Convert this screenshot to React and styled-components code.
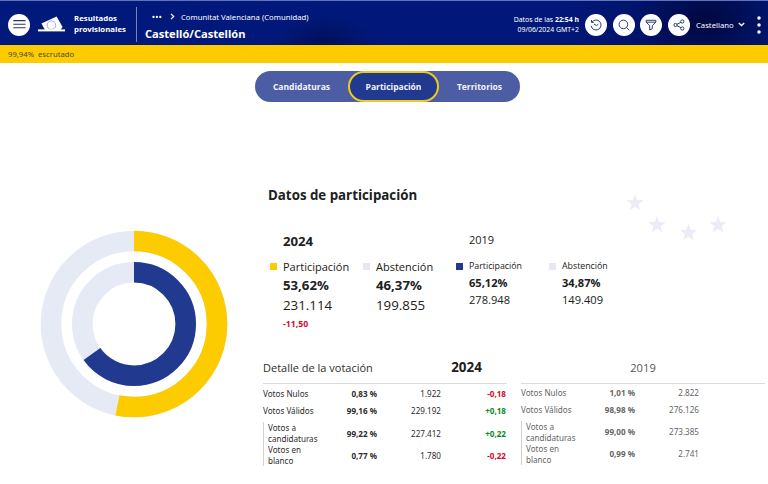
import styled, { createGlobalStyle, css } from 'styled-components';

const OUTER = { radius: 83, width: 20.6, value: 53.2, color: '#fccc00' };
const INNER = { radius: 51.7, width: 20.6, value: 65.12, color: '#213a8f' };

const TABS = ['Candidaturas', 'Participación', 'Territorios'];

const STATS_2024 = [
  { label: 'Participación', percent: '53,62%', votes: '231.114', diff: '-11,50', color: '#fccc00' },
  { label: 'Abstención', percent: '46,37%', votes: '199.855', color: '#e5e8f2' },
];

const STATS_2019 = [
  { label: 'Participación', percent: '65,12%', votes: '278.948', color: '#213a8f' },
  { label: 'Abstención', percent: '34,87%', votes: '149.409', color: '#e5e8f2' },
];

const DETAIL_2024 = [
  { label: 'Votos Nulos', percent: '0,83 %', votes: '1.922', diff: '-0,18' },
  { label: 'Votos Válidos', percent: '99,16 %', votes: '229.192', diff: '+0,18' },
  { label: 'Votos a candidaturas', percent: '99,22 %', votes: '227.412', diff: '+0,22', nested: true },
  { label: 'Votos en blanco', percent: '0,77 %', votes: '1.780', diff: '-0,22', nested: true },
];

const DETAIL_2019 = [
  { label: 'Votos Nulos', percent: '1,01 %', votes: '2.822' },
  { label: 'Votos Válidos', percent: '98,98 %', votes: '276.126' },
  { label: 'Votos a candidaturas', percent: '99,00 %', votes: '273.385', nested: true },
  { label: 'Votos en blanco', percent: '0,99 %', votes: '2.741', nested: true },
];

const STARS = [
  [10, 10],
  [32, 32],
  [63.5, 40],
  [93, 32],
];

const starPoints = (cx, cy, r) =>
  Array.from({ length: 10 }, (_, i) => {
    const angle = (i * Math.PI) / 5 - Math.PI / 2;
    const dist = i % 2 ? r * 0.42 : r;
    return `${cx + dist * Math.cos(angle)},${cy + dist * Math.sin(angle)}`;
  }).join(' ');

const Ring = ({ radius, width, value, color }) => (
  <g fill="none" strokeWidth={width} transform="rotate(-90 94 94)">
    <circle cx="94" cy="94" r={radius} stroke="#e6eaf4" />
    <circle
      cx="94"
      cy="94"
      r={radius}
      stroke={color}
      pathLength="100"
      strokeDasharray={`${value} ${100 - value}`}
    />
  </g>
);

const StatGroup = ({ year, items, small }) => (
  <Group>
    <Year $small={small}>{year}</Year>
    <GroupItems>
      {items.map((item) => (
        <Stat key={item.label}>
          <Marker $color={item.color} />
          <StatBody>
            <StatLabel $small={small}>{item.label}</StatLabel>
            <StatPercent $small={small}>{item.percent}</StatPercent>
            <StatVotes $small={small}>{item.votes}</StatVotes>
            {item.diff && <StatDiff>{item.diff}</StatDiff>}
          </StatBody>
        </Stat>
      ))}
    </GroupItems>
  </Group>
);

const DetailTable = ({ title, year, rows, muted }) => (
  <Detail $muted={muted}>
    <DetailHead $muted={muted}>
      <DetailTitle>{title}</DetailTitle>
      <DetailYear $muted={muted}>{year}</DetailYear>
    </DetailHead>
    {rows
      .filter((row) => !row.nested)
      .map((row) => (
        <DetailRow key={row.label} row={row} />
      ))}
    <NestedRows $muted={muted}>
      {rows
        .filter((row) => row.nested)
        .map((row) => (
          <DetailRow key={row.label} row={row} />
        ))}
    </NestedRows>
  </Detail>
);

const DetailRow = ({ row }) => (
  <Row $nested={row.nested}>
    <span>{row.label}</span>
    <Percent>{row.percent}</Percent>
    <Votes>{row.votes}</Votes>
    {row.diff && <Diff $negative={row.diff.startsWith('-')}>{row.diff}</Diff>}
  </Row>
);

const App = () => {
  return (
    <Page>
      <GlobalStyle />
      <Header>
        <RoundButton aria-label="Menú">
          <svg width="13" height="11" viewBox="0 0 13 11" stroke="#26356f" strokeWidth="1.1">
            <path d="M0.3 1.6h12.2M0.3 5.2h12.2M0.3 8.8h12.2" />
          </svg>
        </RoundButton>
        <Logo width="27" height="17" viewBox="0 0 27 17">
          <path d="M3.4 7.4 L18.6 0.4 L24.6 11 L22.4 14 H7 Z" fill="#fff" />
          <circle cx="13.4" cy="9.2" r="4.3" fill="#fff" stroke="#7d88bd" strokeWidth="0.7" />
          <rect x="0" y="13.4" width="27" height="2" fill="#fff" />
        </Logo>
        <Brand>
          Resultados
          <br />
          provisionales
        </Brand>
        <Place>
          <Breadcrumb>
            <svg width="10" height="4" viewBox="0 0 10 4" fill="#fff">
              <circle cx="1.5" cy="2" r="1.15" />
              <circle cx="4.9" cy="2" r="1.15" />
              <circle cx="8.3" cy="2" r="1.15" />
            </svg>
            <svg width="5" height="7" viewBox="0 0 5 7" fill="none" stroke="#fff" strokeWidth="1.2">
              <path d="M1 0.8l2.7 2.7L1 6.2" />
            </svg>
            <span>Comunitat Valenciana (Comunidad)</span>
          </Breadcrumb>
          <PlaceName>Castelló/Castellón</PlaceName>
        </Place>
        <Updated>
          Datos de las <b>22:54 h</b>
          <br />
          09/06/2024 GMT+2
        </Updated>
        <Actions>
          <RoundButton aria-label="Histórico">
            <Icon viewBox="0 0 12 12">
              <path d="M1.9 3.2A5 5 0 1 1 1.1 6.8" />
              <path d="M1.5 1v2.4h2.4M4 5l2.4 1.6 1.9-1.4" />
            </Icon>
          </RoundButton>
          <RoundButton aria-label="Buscar">
            <Icon viewBox="0 0 12 12">
              <circle cx="5.4" cy="5.4" r="4.3" />
              <path d="M8.5 8.5l2.8 2.8" />
            </Icon>
          </RoundButton>
          <RoundButton aria-label="Filtrar">
            <Icon viewBox="0 0 12 12">
              <path d="M1.2 1.3h9.6v1.9L7.3 6.6v3.1L4.7 11V6.6L1.2 3.2zM1.2 3.2h9.6" />
            </Icon>
          </RoundButton>
          <RoundButton aria-label="Compartir">
            <Icon viewBox="0 0 12 12">
              <circle cx="2.5" cy="6" r="1.6" />
              <circle cx="9.3" cy="2.5" r="1.6" />
              <circle cx="9.3" cy="9.5" r="1.6" />
              <path d="M4 5.3l3.9-2M4 6.7l3.9 2" />
            </Icon>
          </RoundButton>
        </Actions>
        <Language>
          Castellano
          <svg width="7" height="5" viewBox="0 0 7 5" fill="none" stroke="#fff" strokeWidth="1.3">
            <path d="M0.8 1l2.7 2.5L6.2 1" />
          </svg>
        </Language>
        <svg width="4" height="18" viewBox="0 0 4 18" fill="#fff">
          <circle cx="2" cy="2" r="1.75" />
          <circle cx="2" cy="9" r="1.75" />
          <circle cx="2" cy="16" r="1.75" />
        </svg>
      </Header>
      <Counted>99,94%&nbsp; escrutado</Counted>

      <Tabs>
        {TABS.map((tab) => (
          <Tab key={tab} $active={tab === 'Participación'}>
            {tab}
          </Tab>
        ))}
      </Tabs>

      <Main>
        <Chart width="188" height="188" viewBox="0 0 188 188">
          <Ring {...OUTER} />
          <Ring {...INNER} />
        </Chart>
        <Content>
          <Title>Datos de participación</Title>
          <Stars width="104" height="52" viewBox="0 0 104 52" fill="#ebecf8">
            {STARS.map(([x, y]) => (
              <polygon key={x} points={starPoints(x, y, 9)} />
            ))}
          </Stars>
          <Stats>
            <StatGroup year="2024" items={STATS_2024} />
            <StatGroup year="2019" items={STATS_2019} small />
          </Stats>
          <Details>
            <DetailTable title="Detalle de la votación" year="2024" rows={DETAIL_2024} />
            <DetailTable year="2019" rows={DETAIL_2019} muted />
          </Details>
        </Content>
      </Main>
    </Page>
  );
};

// Styled Components
const GlobalStyle = createGlobalStyle`
  * {
    box-sizing: border-box;
  }

  body {
    margin: 0;
    background: #fff;
    font-family: 'Open Sans', 'Noto Sans', sans-serif;
    color: #202020;
  }

  svg {
    display: block;
    flex: none;
  }
`;

const Page = styled.div`
  width: 768px;
  height: 484px;
  overflow: hidden;
`;

const Header = styled.header`
  display: flex;
  align-items: center;
  height: 45px;
  padding: 3px 7px 0 8px;
  border-top: 1px solid #6273b6;
  background:
    radial-gradient(50px 28px at 325px 42px, rgba(0, 8, 70, 0.6), transparent),
    radial-gradient(70px 50px at 705px 20px, rgba(0, 4, 50, 0.75), transparent),
    linear-gradient(90deg, #01197a 0%, #01187a 72%, #01126a 85%, #01156c 100%);
  color: #fff;
`;

const RoundButton = styled.button`
  display: flex;
  align-items: center;
  justify-content: center;
  flex: none;
  width: 22px;
  height: 22px;
  padding: 0;
  border: none;
  border-radius: 50%;
  background: #fff;
`;

const Icon = styled.svg`
  width: 12px;
  height: 12px;
  fill: none;
  stroke: #26356f;
  stroke-width: 0.95;
`;

const Logo = styled.svg`
  margin-left: 8px;
`;

const Brand = styled.div`
  width: 62px;
  margin: -1px 0 0 9px;
  font-size: 7.8px;
  font-weight: 700;
  line-height: 11px;
  white-space: nowrap;
`;

const Place = styled.div`
  height: 35px;
  padding: 3px 0 0 9px;
  border-left: 1px solid #7882b5;
  white-space: nowrap;
`;

const Breadcrumb = styled.div`
  display: flex;
  align-items: center;
  gap: 8px;
  height: 13px;
  padding-left: 6px;
  font-family: 'Noto Sans', sans-serif;
  font-size: 7.7px;

  span {
    margin-left: -2px;
  }
`;

const PlaceName = styled.div`
  margin: 2px 0 0 -1px;
  font-size: 11.1px;
  font-weight: 700;
  line-height: 17px;
`;

const Updated = styled.div`
  margin-left: auto;
  font-family: 'Noto Sans', sans-serif;
  font-size: 6.9px;
  line-height: 10px;
  text-align: right;
  white-space: nowrap;
`;

const Actions = styled.div`
  display: flex;
  gap: 5.7px;
  margin-left: 6px;
`;

const Language = styled.div`
  display: flex;
  align-items: center;
  gap: 4px;
  width: 61px;
  margin-left: 6px;
  font-family: 'Noto Sans', sans-serif;
  font-size: 7.7px;
`;

const Counted = styled.div`
  height: 18px;
  padding-left: 8px;
  background: #fccc00;
  color: #514a2c;
  font-family: 'Noto Sans', sans-serif;
  font-size: 7.7px;
  line-height: 18px;
`;

const Tabs = styled.nav`
  display: grid;
  grid-template-columns: 93px 91px 81px;
  width: 265px;
  height: 31px;
  margin: 8px 0 0 255px;
  border-radius: 16px;
  background: #4c5da4;
`;

const Tab = styled.button`
  padding: 0;
  border: none;
  border-radius: 16px;
  background: none;
  color: #f3f5fc;
  font: 700 8.5px 'Open Sans', 'Noto Sans', sans-serif;

  ${(props) =>
    props.$active &&
    css`
      border: 2px solid #f0c91f;
      background: #213a8f;
    `}
`;

const Main = styled.main`
  display: flex;
`;

const Chart = styled.svg`
  margin: 128px 0 0 40px;
`;

const Content = styled.section`
  position: relative;
  flex: 1;
  padding: 83px 0 0 35px;
`;

const Title = styled.h2`
  margin: 0 0 0 5px;
  font-size: 13.3px;
  font-weight: 700;
  line-height: 20px;
`;

/* decorative stars float behind the data */
const Stars = styled.svg`
  position: absolute;
  top: 91px;
  left: 397px;
`;

const Stats = styled.div`
  display: flex;
  height: 147px;
  padding: 27px 0 0 7px;
`;

const Group = styled.div`
  width: 186px;
`;

const Year = styled.div`
  height: 25px;
  padding-left: 13px;
  font-size: 13.2px;
  font-weight: 700;
  line-height: 19px;

  ${(props) =>
    props.$small &&
    css`
      font-size: 11px;
      font-weight: 400;
      line-height: 16px;
    `}
`;

const GroupItems = styled.div`
  display: flex;
`;

const Stat = styled.div`
  display: flex;
  width: 93px;
`;

const Marker = styled.span`
  width: 7px;
  height: 7px;
  margin: 6px 6px 0 0;
  background: ${(props) => props.$color};
`;

const StatBody = styled.div`
  white-space: nowrap;
`;

const StatLabel = styled.div`
  font-size: ${(props) => (props.$small ? '8.8px' : '11px')};
  line-height: 19px;
`;

const StatPercent = styled.div`
  font-size: ${(props) => (props.$small ? '11.1px' : '13.2px')};
  font-weight: 700;
  line-height: ${(props) => (props.$small ? '14px' : '19px')};
`;

const StatVotes = styled.div`
  font-size: ${(props) => (props.$small ? '11.1px' : '13.3px')};
  line-height: 20px;
`;

const StatDiff = styled.div`
  color: #d00b31;
  font-size: 8.7px;
  font-weight: 700;
  line-height: 18px;
`;

const Details = styled.div`
  display: flex;
  gap: 14px;
`;

const Detail = styled.div`
  width: 244px;
  color: ${(props) => (props.$muted ? '#666' : '#2d2d2d')};
`;

const DetailHead = styled.div`
  display: grid;
  grid-template-columns: ${(props) => (props.$muted ? '81px 82px' : '163px 81px')};
  align-items: center;
  height: 32px;
  margin-bottom: ${(props) => (props.$muted ? 0 : '1px')};
  padding-bottom: 1px;
  border-bottom: 1px solid #dadada;
`;

const DetailTitle = styled.div`
  font-size: 11px;
`;

const DetailYear = styled.div`
  color: ${(props) => (props.$muted ? '#555' : '#202020')};
  font-size: ${(props) => (props.$muted ? '11.2px' : '13.4px')};
  font-weight: ${(props) => (props.$muted ? 400 : 700)};
  text-align: center;
`;

const NestedRows = styled.div`
  margin-top: ${(props) => (props.$muted ? '2.5px' : '3px')};
  border-left: 1px solid #d2d2d2;
`;

const Row = styled.div`
  display: grid;
  grid-template-columns: 64px 50px 64px 65px;
  align-items: center;
  height: 17px;
  font-family: 'Noto Sans', sans-serif;
  font-size: 8.1px;
  line-height: 11px;

  ${(props) =>
    props.$nested &&
    css`
      grid-template-columns: 55px 54px 64px 65px;
      height: 22px;
      padding-left: 4px;
    `}
`;

const Percent = styled.span`
  font-weight: 700;
  text-align: right;
`;

const Votes = styled.span`
  text-align: right;
`;

const Diff = styled.span`
  color: ${(props) => (props.$negative ? '#d00b31' : '#0c8a1e')};
  font-weight: 700;
  text-align: right;
`;

export default App;
